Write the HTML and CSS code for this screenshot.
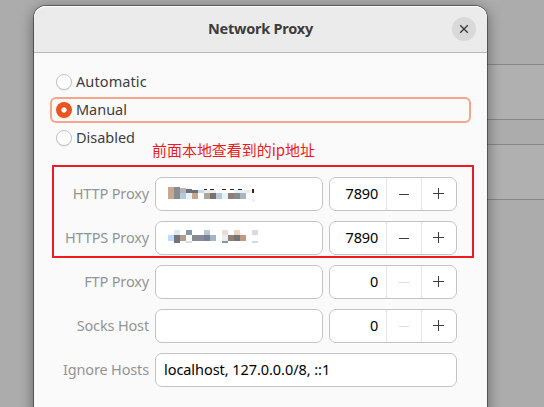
FILE: index.html
```html
<!DOCTYPE html>
<html lang="en">
<head>
<meta charset="utf-8">
<title>Network Proxy</title>
<link rel="stylesheet" href="styles.css">
</head>
<body>
<div class="backdrop"><div class="gap-a"></div><div class="item-a"></div><div class="gap-b"></div><div class="item-b"></div></div>
<main class="dialog">
  <header class="header">
    <h1 class="title">Network Proxy</h1>
    <button class="close" aria-label="Close"><svg width="10" height="10" viewBox="0 0 10 10"><path d="M1.2 1.2 8.8 8.8M8.8 1.2 1.2 8.8"/></svg></button>
  </header>
  <section class="modes">
    <label class="mode"><i class="radio"></i><span class="auto">Automatic</span></label>
    <label class="mode focused"><i class="radio checked"></i><span>Manual</span></label>
    <label class="mode"><i class="radio"></i><span>Disabled</span></label>
  </section>
  <section class="form">
    <span class="label">HTTP Proxy</span>
    <div class="entry"><svg class="mosaic" width="90" height="18" viewBox="0 1 90 18" shape-rendering="crispEdges">
      <path fill="#c5a792" d="M0 3h6v12H0zM24 9h6v6h-6z"/><path fill="#858c94" d="M6 3h6v12H6z"/><path fill="#b9b5b5" d="M12 4h6v5h-6z"/>
      <path fill="#b8c9da" d="M12 9h6v6h-6zM48 9h6v6h-6z"/><path fill="#e6f3fd" d="M18 9h6v6h-6zM54 9h6v6h-6zM84 15h3v3h-3z"/><path fill="#6c7179" d="M18 5h6v4h-6zM24 6h6v3h-6z"/>
      <path fill="#badcf8" d="M30 6h6v3h-6z"/><path fill="#f3e9dc" d="M36 6h6v3h-6zM78 6h5v3h-5z"/><path fill="#e6f0f8" d="M42 6h6v3h-6zM66 6h12v3H66z"/>
      <path fill="#aaa69e" d="M36 9h6v6h-6z"/><path fill="#7b726b" d="M42 9h6v6h-6z"/><path fill="#8f7e73" d="M60 9h6v6h-6z"/><path fill="#878a8e" d="M66 9h6v6h-6z"/><path fill="#aab6bd" d="M72 9h6v6h-6z"/>
      <path fill="#252525" d="M36 5h3v1h-3zM42 5h4v1h-4zM54 5h4v1h-4zM62 5h4v1h-4zM70 5h4v1h-4zM84 5h2v4h-2z"/></svg></div>
    <div class="spin"><span class="value">7890</span><b class="step minus"></b><b class="step plus"></b></div>
    <span class="label">HTTPS Proxy</span>
    <div class="entry"><svg class="mosaic" width="90" height="18" viewBox="0 3 90 18" shape-rendering="crispEdges">
      <path fill="#dce9ed" d="M6 4h6v5H6z"/><path fill="#8795aa" d="M18 4h6v5h-6z"/><path fill="#bbc5cf" d="M36 4h6v5h-6z"/><path fill="#e6dfd7" d="M54 4h6v5h-6z"/><path fill="#e8d6bf" d="M66 4h6v5h-6z"/><path fill="#d8dbe3" d="M84 4h6v5h-6zM84 15h6v2h-6z"/>
      <path fill="#badcf8" d="M0 9h6v6H0z"/><path fill="#747378" d="M6 9h6v8H6zM66 9h6v6h-6z"/><path fill="#b09f90" d="M12 9h6v6h-6z"/><path fill="#8f8074" d="M60 9h6v6h-6z"/><path fill="#888a8b" d="M24 9h6v6h-6z"/><path fill="#8688a4" d="M30 9h6v6h-6z"/><path fill="#748393" d="M36 9h6v6h-6z"/><path fill="#a3b5c7" d="M42 9h6v6h-6z"/><path fill="#e7edf3" d="M54 9h6v6h-6z"/><path fill="#c09a80" d="M72 9h6v6h-6z"/><path fill="#8795a0" d="M54 15h6v2h-6z"/><path fill="#dedfdc" d="M18 15h6v2h-6z"/></svg></div>
    <div class="spin"><span class="value">7890</span><b class="step minus"></b><b class="step plus"></b></div>
    <span class="label">FTP Proxy</span>
    <div class="entry"></div>
    <div class="spin"><span class="value">0</span><b class="step minus off"></b><b class="step plus"></b></div>
    <span class="label">Socks Host</span>
    <div class="entry"></div>
    <div class="spin"><span class="value">0</span><b class="step minus off"></b><b class="step plus"></b></div>
    <span class="label">Ignore Hosts</span>
    <div class="entry wide"><span class="hosts">localhost, 127.0.0.0/8, ::1</span></div>
  </section>
</main>
<div class="note">前面本地查看到的ip地址</div>
<div class="marker"></div>
</body>
</html>
```
FILE: styles.css
```css
* { box-sizing: border-box; }
body {
  margin: 0; width: 544px; height: 407px; overflow: hidden; position: relative;
  background: #acacac; color: #3d3d3d;
  font: 14.5px/20px "Noto Sans", sans-serif;
}
.backdrop { position: absolute; right: 0; top: 0; width: 80px; height: 407px; display: grid; grid-template-rows: 64px 56px 24px 56px; }
.item-a, .item-b { border-width: 1px 0; border-style: solid; border-color: #888; }
.item-a, .item-b { background: #b0b0b0; }
.gap-a, .gap-b { background: #acacac; }
.dialog {
  position: relative; width: 453px; height: 420px; margin: 6px 0 0 34px;
  background: #fafafa; border-radius: 12px 12px 0 0;
  box-shadow: 0 0 0 1px rgba(0,0,0,.38), 0 3px 14px 1px rgba(0,0,0,.4);
}
.header {
  height: 47px; background: #ebebeb; border-bottom: 1px solid #bababa; border-radius: 12px 12px 0 0;
  box-shadow: inset 0 1px #fff; display: grid; grid-template-columns: 1fr 24px; align-items: center; padding: 0 11px 0 35px;
}
.title { margin: -2px 0 0; text-align: center; font-size: 14.5px; font-weight: 700; line-height: 20px; letter-spacing: -.23px; }
.close { width: 24px; height: 24px; padding: 0; border: 0; border-radius: 50%; background: #d9d9d9; display: grid; place-items: center; }
.close path { stroke: #3d3d3d; stroke-width: 1.4; fill: none; }
.modes { padding: 16px 16px 0; display: grid; gap: 2px; }
.mode { height: 26px; padding-left: 6px; display: flex; align-items: center; gap: 4px; width: 421px; }
.mode span { margin-top: -2px; letter-spacing: -.03px; }
.mode .auto { letter-spacing: .1px; }
.focused { box-shadow: inset 0 0 0 2px #f4a58a; border-radius: 6px; }
.radio { width: 16px; height: 16px; border-radius: 50%; border: 1px solid #c0c0c0; background: #fff; box-shadow: 0 1px 1px #0001; }
.checked { border: 0; background: radial-gradient(circle, #fff 2.3px, #e95420 3px); }
.form { margin: 26px 0 0 16px; display: grid; grid-template-columns: 99px 168px 128px; column-gap: 6px; row-gap: 10px; grid-auto-rows: 34px; align-items: center; }
.label { color: #929595; text-align: right; white-space: nowrap; letter-spacing: -.15px; margin-top: -2px; }
.entry, .spin { height: 34px; border: 1px solid #c4c4c4; border-radius: 7px; background: #fff; display: flex; align-items: center; color: #000; }
.entry { padding-left: 8px; }
.wide { grid-column: 2 / 4; }
.hosts { margin-top: -2px; letter-spacing: -.06px; }
.mosaic { margin-left: 4px; }
.spin { display: grid; grid-template-columns: 56px 35px 35px; align-items: stretch; overflow: hidden; }
.value { text-align: right; padding-right: 8px; line-height: 31px; letter-spacing: -.2px; }
.step { border-left: 1px solid #e6e6e6; padding-right: 1px; display: grid; place-items: center; }
.step::before, .step::after { content: ""; grid-area: 1 / 1; width: 11px; height: 1px; background: #3d3d3d; }
.minus::before { width: 10px; }
.minus::after { display: none; }
.plus { padding-bottom: 1px; }
.plus::after { width: 1px; height: 11px; }
.off::before { background: #dcdcdc; }
.note { position: absolute; left: 152px; top: 139px; color: #ed1c24; font: 15px/22px "Noto Sans CJK SC", sans-serif; letter-spacing: -.04px; white-space: nowrap; }
.marker { position: absolute; left: 52px; top: 165px; width: 422px; height: 93px; border: 2px solid #ed1c24; }
```
